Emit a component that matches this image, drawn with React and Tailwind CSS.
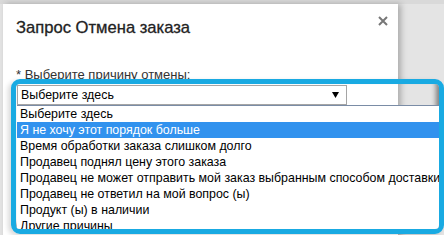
import React from "react";

const reasons = [
    "Выберите здесь",
    "Я не хочу этот порядок больше",
    "Время обработки заказа слишком долго",
    "Продавец поднял цену этого заказа",
    "Продавец не может отправить мой заказ выбранным способом доставки",
    "Продавец не ответил на мой вопрос (ы)",
    "Продукт (ы) в наличии",
    "Другие причины",
];

const App = () => {
    const selected = 1;

    return (
        <div
            className="relative w-[444px] h-[235px] overflow-hidden bg-[#e4e4e4]"
            style={{ fontFamily: '"Liberation Sans", Arial, sans-serif' }}
        >
            {/* page behind the dialog */}
            <div className="absolute left-0 top-0 w-full h-[4px] bg-[#d9d9d9]" />

            {/* Dialog */}
            <div className="absolute left-[3px] top-[4px] w-[395px] h-[240px] bg-white shadow-[3px_0_6px_rgba(0,0,0,0.25)]">
                <div className="flex items-start justify-between pl-[13px] pr-[10px] pt-[14px]">
                    <h1 className="text-[16.6px] leading-[20px] text-[#222] [-webkit-text-stroke:0.3px_#222]">
                        Запрос Отмена заказа
                    </h1>
                    <svg width="10" height="10" viewBox="0 0 10 10" className="mt-[-2px]">
                        <path d="M1 1 L9 9 M9 1 L1 9" stroke="#777" strokeWidth="2" />
                    </svg>
                </div>
                <p className="mt-[29px] pl-[13px] text-[13px] leading-[16px] text-[#333]">
                    * Выберите причину отмены:
                </p>
            </div>

            {/* Highlight frame with the opened select */}
            <div className="absolute left-[11px] top-[79px] w-[433px] h-[155px] rounded-[9px] border-[5px] border-[#19aae2] shadow-[inset_-3px_-4px_5px_rgba(0,0,0,0.45),-3px_2px_5px_rgba(0,0,0,0.15)] overflow-hidden">
                <div className="pl-[1px] pt-[1px]">
                    <div className="flex items-center justify-between w-[330px] h-[20px] border border-[#a5a5a5] bg-white pl-[3px] pr-[7px] text-[12.4px] text-black">
                        <span>Выберите здесь</span>
                        <svg width="7" height="6" viewBox="0 0 7 6">
                            <path d="M0 0 H7 L3.5 6 Z" fill="#000" />
                        </svg>
                    </div>
                    <ul className="border-t border-[#7a8ca6] bg-white text-[12.4px] leading-[16px] text-black">
                        {reasons.map((r, i) => (
                            <li
                                key={r}
                                className={`h-[16px] pl-[3px] whitespace-nowrap ${
                                    i === selected ? "bg-[#3192ee] text-white" : ""
                                }`}
                            >
                                {r}
                            </li>
                        ))}
                    </ul>
                </div>
            </div>
        </div>
    );
};

export default App;
